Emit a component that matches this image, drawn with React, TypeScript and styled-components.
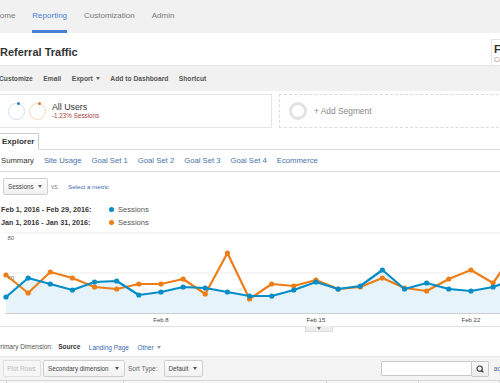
import React from "react";
import styled, { createGlobalStyle } from "styled-components";
import { Search } from "lucide-react";

const Global = createGlobalStyle`
  html, body { margin: 0; padding: 0; background: #fff; }
  body { width: 500px; height: 383px; overflow: hidden; font-family: "Liberation Sans", Arial, sans-serif; }
  * { box-sizing: border-box; }
`;

const Page = styled.div`
  width: 500px;
  height: 383px;
  overflow: hidden;
  background: #fff;
  color: #333;
`;

/* ---------- top nav ---------- */
const Nav = styled.nav`
  height: 33px;
  background: #f1f1f1;
  display: flex;
  align-items: stretch;
  gap: 17px;
`;
const NavItem = styled.div<{ $active?: boolean; $shift?: number }>`
  display: flex;
  align-items: center;
  margin-left: ${(p) => p.$shift ?? 0}px;
  font-size: 8px;
  color: ${(p) => (p.$active ? "#4a7fd6" : "#7a7a7a")};
  border-bottom: 3px solid ${(p) => (p.$active ? "#4a7fd6" : "transparent")};
  white-space: nowrap;
`;

/* ---------- header ---------- */
const Header = styled.header`
  height: 33px;
  background: #fff;
  border-bottom: 1px solid #e6e6e6;
  display: flex;
  justify-content: space-between;
  align-items: flex-start;
`;
const Title = styled.h1`
  margin: 12px 0 0 0;
  font-size: 11px;
  line-height: 14px;
  font-weight: bold;
  color: #333;
  white-space: nowrap;
`;
const DateBox = styled.div`
  flex-shrink: 0;
  width: 150px;
  margin-right: -141px;
  margin-top: 6px;
  height: 26px;
  border: 1px solid #e3e3e3;
  border-bottom: none;
  padding: 3px 0 0 2px;
  white-space: nowrap;
  overflow: hidden;
`;
const DateMain = styled.div`
  font-size: 11px;
  line-height: 12px;
  font-weight: bold;
  color: #333;
`;
const DateSub = styled.div`
  font-size: 7px;
  line-height: 9px;
  color: #999;
`;

/* ---------- toolbar ---------- */
const Toolbar = styled.div`
  height: 25px;
  background: #f1f1f1;
  display: flex;
  align-items: center;
  gap: 10.5px;
  margin-left: -1px;
`;
const ToolItem = styled.span`
  font-size: 6.7px;
  font-weight: bold;
  color: #555;
  white-space: nowrap;
  display: inline-flex;
  align-items: center;
  gap: 3px;
`;
const Caret = styled.span<{ $color?: string }>`
  display: inline-block;
  width: 0;
  height: 0;
  border-left: 2.5px solid transparent;
  border-right: 2.5px solid transparent;
  border-top: 3px solid ${(p) => p.$color ?? "#666"};
`;

/* ---------- segments ---------- */
const SegmentRow = styled.div`
  display: flex;
  margin-top: 3px;
  height: 34px;
  gap: 7px;
`;
const SegmentBox = styled.div<{ $dashed?: boolean }>`
  flex-shrink: 0;
  width: ${(p) => (p.$dashed ? 240 : 280)}px;
  margin-left: ${(p) => (p.$dashed ? 0 : -8)}px;
  height: 34px;
  border: 1px ${(p) => (p.$dashed ? "dashed #dcdcdc" : "solid #e5e5e5")};
  display: flex;
  align-items: center;
  padding-left: ${(p) => (p.$dashed ? 9 : 15)}px;
`;
const Ring = styled.div<{ $color: string; $dot?: string; $width?: number; $size?: number }>`
  position: relative;
  width: ${(p) => p.$size ?? 17}px;
  height: ${(p) => p.$size ?? 17}px;
  border-radius: 50%;
  border: ${(p) => p.$width ?? 1.5}px solid ${(p) => p.$color};
  margin-right: 4px;
  &::after {
    content: "";
    display: ${(p) => (p.$dot ? "block" : "none")};
    position: absolute;
    top: -1.5px;
    left: 8px;
    width: 3px;
    height: 3px;
    border-radius: 50%;
    background: ${(p) => p.$dot};
  }
`;
const SegText = styled.div`
  margin-left: 2px;
  display: flex;
  flex-direction: column;
`;
const SegName = styled.div`
  font-size: 8.8px;
  line-height: 10px;
  color: #333;
`;
const SegDelta = styled.div`
  font-size: 6.3px;
  line-height: 8px;
  color: #a94442;
`;
const AddSeg = styled.span`
  margin-left: 3px;
  font-size: 8.4px;
  color: #888;
  white-space: nowrap;
`;

/* ---------- tabs ---------- */
const TabBar = styled.div`
  margin-top: 5px;
  height: 17px;
  border-bottom: 1px solid #d9d9d9;
  display: flex;
  align-items: stretch;
`;
const Tab = styled.div`
  margin-left: -1px;
  margin-bottom: -1px;
  padding: 0 4px 0 2px;
  background: #fff;
  border: 1px solid #ccc;
  border-bottom: 1px solid #fff;
  font-size: 8px;
  font-weight: bold;
  color: #333;
  display: flex;
  align-items: center;
`;
const SubTabs = styled.div`
  height: 22px;
  border-bottom: 1px solid #dedede;
  display: flex;
  align-items: center;
  gap: 10px;
  padding-left: 1px;
`;
const SubTab = styled.span<{ $active?: boolean }>`
  font-size: 7.7px;
  color: ${(p) => (p.$active ? "#333" : "#4872a8")};
  white-space: nowrap;
`;

/* ---------- metric selector ---------- */
const MetricRow = styled.div`
  margin-top: 5px;
  height: 18px;
  display: flex;
  align-items: center;
  padding-left: 3px;
`;
const Select = styled.div<{ $w: number; $disabled?: boolean }>`
  width: ${(p) => p.$w}px;
  height: 17px;
  border: 1px solid ${(p) => (p.$disabled ? "#e0e0e0" : "#cfcfcf")};
  border-radius: 2px;
  background: ${(p) => (p.$disabled ? "#f6f6f6" : "linear-gradient(#fdfdfd, #f1f1f1)")};
  display: flex;
  align-items: center;
  justify-content: ${(p) => (p.$disabled ? "center" : "space-between")};
  padding: 0 5px 0 4px;
  font-size: 6.3px;
  color: ${(p) => (p.$disabled ? "#bbb" : "#444")};
  white-space: nowrap;
  flex-shrink: 0;
`;
const Vs = styled.span`
  margin-left: 3px;
  margin-right: 9px;
  font-size: 6.3px;
  color: #888;
`;
const LinkText = styled.span<{ $size?: number }>`
  font-size: ${(p) => p.$size ?? 6.2}px;
  color: #3a6bb0;
  white-space: nowrap;
  display: inline-flex;
  align-items: center;
  gap: 3px;
`;

/* ---------- legend ---------- */
const Legend = styled.div`
  margin-top: 8px;
  display: grid;
  grid-template-columns: 108px auto;
  grid-auto-rows: 13px;
  align-items: center;
  padding-left: 1px;
`;
const LegendRange = styled.span`
  font-size: 7.2px;
  font-weight: bold;
  color: #333;
  white-space: nowrap;
`;
const LegendSeries = styled.span<{ $color: string }>`
  display: flex;
  align-items: center;
  gap: 4px;
  font-size: 7.6px;
  color: #555;
  &::before {
    content: "";
    width: 5px;
    height: 5px;
    border-radius: 50%;
    background: ${(p) => p.$color};
  }
`;

/* ---------- chart ---------- */
const ChartWrap = styled.div`
  position: relative;
  height: 98px;
  border-bottom: 1px solid #e0e0e0;
`;
const Handle = styled.div`
  position: absolute;
  left: 305px;
  top: 97px;
  width: 28px;
  height: 6px;
  background: #eee;
  border: 1px solid #ddd;
  border-top: none;
  display: flex;
  justify-content: center;
  align-items: center;
`;

/* ---------- dimension row ---------- */
const DimRow = styled.div`
  height: 30px;
  display: flex;
  align-items: flex-end;
  padding-bottom: 5px;
  margin-left: -4px;
  gap: 8.5px;
  border-bottom: 1px solid #e5e5e5;
`;
const DimLabel = styled.span<{ $bold?: boolean }>`
  font-size: 6.5px;
  line-height: 8px;
  color: ${(p) => (p.$bold ? "#333" : "#555")};
  font-weight: ${(p) => (p.$bold ? "bold" : "normal")};
  white-space: nowrap;
  margin-right: ${(p) => (p.$bold ? 0 : -3)}px;
`;

const Controls = styled.div`
  height: 23px;
  background: #f4f4f4;
  display: flex;
  align-items: center;
  padding-left: 3px;
  gap: 2px;
`;
const SortLabel = styled.span`
  margin: 0 4px 0 1px;
  font-size: 6.5px;
  color: #666;
  white-space: nowrap;
`;
const SearchGroup = styled.div`
  margin-left: auto;
  display: flex;
  align-items: center;
  margin-right: -22px;
`;
const SearchInput = styled.div`
  width: 91px;
  height: 15px;
  background: #fff;
  border: 1px solid #c8c8c8;
  border-radius: 2px 0 0 2px;
`;
const SearchButton = styled.div`
  width: 17px;
  height: 16px;
  border: 1px solid #c8c8c8;
  border-left: none;
  border-radius: 0 2px 2px 0;
  background: linear-gradient(#fbfbfb, #ececec);
  display: flex;
  align-items: center;
  justify-content: center;
`;
const Advanced = styled.span`
  margin-left: 5px;
  font-size: 6.5px;
  color: #3a6bb0;
  white-space: nowrap;
`;

const TableHead = styled.div`
  height: 20px;
  display: grid;
  grid-template-columns: 7px 117px 203px 92px 1fr;
  border-top: 1px solid #d5d5d5;
  background: #f7f7f7;
`;
const HeadCell = styled.div`
  border-right: 1px solid #d8d8d8;
`;

/* ---------- data ---------- */
const blue = [16, 35, 29, 23, 31, 32, 18, 21, 26, 25, 21, 17, 17, 23, 31, 24, 27, 43, 24, 30, 24, 22, 26, 34];
const orange = [38, 20, 41, 35, 26, 24, 29, 29, 34, 19, 60, 14, 29, 27, 33, 24, 26, 35, 25, 22, 34, 43, 30, 62];

const X0 = 6;
const STEP = 22.14;
const BASE = 84; // svg y of value 0
const px = (i: number) => X0 + i * STEP;
const py = (v: number) => BASE - v;

function pts(data: number[]) {
  return data.map((v, i) => `${px(i).toFixed(1)},${py(v).toFixed(1)}`).join(" ");
}

const Chart: React.FC = () => {
  const area =
    `M${px(0)},${BASE} ` +
    blue.map((v, i) => `L${px(i).toFixed(1)},${py(v).toFixed(1)}`).join(" ") +
    ` L${px(blue.length - 1)},${BASE} Z`;
  return (
    <svg width="500" height="98" viewBox="0 0 500 98" style={{ display: "block" }}>
      <line x1="5" y1="4" x2="500" y2="4" stroke="#ececec" strokeWidth="1" />
      <line x1="5" y1="44" x2="500" y2="44" stroke="#ececec" strokeWidth="1" />
      <path d={area} fill="#e6f3fa" />
      <line x1="5" y1={BASE + 0.5} x2="500" y2={BASE + 0.5} stroke="#cfcfcf" strokeWidth="1" />
      <text x="7.5" y="11.3" fontSize="6" fill="#666" fontFamily="Liberation Sans, Arial, sans-serif">80</text>
      <text x="7.5" y="51" fontSize="6" fill="#666" fontFamily="Liberation Sans, Arial, sans-serif">40</text>
      <polyline points={pts(orange)} fill="none" stroke="#ed7e17" strokeWidth="2.2" strokeLinejoin="round" />
      {orange.map((v, i) => (
        <circle key={"o" + i} cx={px(i)} cy={py(v)} r="2.6" fill="#ed7e17" />
      ))}
      <polyline points={pts(blue)} fill="none" stroke="#058dc7" strokeWidth="2.2" strokeLinejoin="round" />
      {blue.map((v, i) => (
        <circle key={"b" + i} cx={px(i)} cy={py(v)} r="2.6" fill="#058dc7" />
      ))}
      {[
        { i: 7, t: "Feb 8" },
        { i: 14, t: "Feb 15" },
        { i: 21, t: "Feb 22" },
      ].map((l) => (
        <text
          key={l.t}
          x={px(l.i)}
          y="93"
          fontSize="6"
          fill="#444"
          textAnchor="middle"
          fontFamily="Liberation Sans, Arial, sans-serif"
        >
          {l.t}
        </text>
      ))}
    </svg>
  );
};

export default function App() {
  return (
    <Page>
      <Global />
      <Nav>
        <NavItem $shift={-6}>Home</NavItem>
        <NavItem $active>Reporting</NavItem>
        <NavItem>Customization</NavItem>
        <NavItem>Admin</NavItem>
      </Nav>

      <Header>
        <Title>Referral Traffic</Title>
        <DateBox>
          <DateMain>Feb 1, 2016 - Feb 29, 2016</DateMain>
          <DateSub>Compare to: Jan 1, 2016 - Jan 31, 2016</DateSub>
        </DateBox>
      </Header>

      <Toolbar>
        <ToolItem>Customize</ToolItem>
        <ToolItem>Email</ToolItem>
        <ToolItem>
          Export <Caret $color="#666" />
        </ToolItem>
        <ToolItem>Add to Dashboard</ToolItem>
        <ToolItem>Shortcut</ToolItem>
      </Toolbar>

      <SegmentRow>
        <SegmentBox>
          <Ring $color="#c9e1f2" $dot="#2a7fbf" />
          <Ring $color="#f5d7bb" $dot="#d9822b" />
          <SegText>
            <SegName>All Users</SegName>
            <SegDelta>-1.23% Sessions</SegDelta>
          </SegText>
        </SegmentBox>
        <SegmentBox $dashed>
          <Ring $color="#e2e2e2" $width={3} $size={18} />
          <AddSeg>+ Add Segment</AddSeg>
        </SegmentBox>
      </SegmentRow>

      <TabBar>
        <Tab>Explorer</Tab>
      </TabBar>
      <SubTabs>
        <SubTab $active>Summary</SubTab>
        <SubTab>Site Usage</SubTab>
        <SubTab>Goal Set 1</SubTab>
        <SubTab>Goal Set 2</SubTab>
        <SubTab>Goal Set 3</SubTab>
        <SubTab>Goal Set 4</SubTab>
        <SubTab>Ecommerce</SubTab>
      </SubTabs>

      <MetricRow>
        <Select $w={45}>
          Sessions <Caret $color="#666" />
        </Select>
        <Vs>vs.</Vs>
        <LinkText>Select a metric</LinkText>
      </MetricRow>

      <Legend>
        <LegendRange>Feb 1, 2016 - Feb 29, 2016:</LegendRange>
        <LegendSeries $color="#058dc7">Sessions</LegendSeries>
        <LegendRange>Jan 1, 2016 - Jan 31, 2016:</LegendRange>
        <LegendSeries $color="#ed7e17">Sessions</LegendSeries>
      </Legend>

      <ChartWrap>
        <Chart />
        <Handle>
          <Caret $color="#777" />
        </Handle>
      </ChartWrap>

      <DimRow>
        <DimLabel>Primary Dimension:</DimLabel>
        <DimLabel $bold>Source</DimLabel>
        <LinkText $size={6.5}>Landing Page</LinkText>
        <LinkText $size={6.5}>
          Other <Caret $color="#999" />
        </LinkText>
      </DimRow>

      <Controls>
        <Select $w={38} $disabled>
          Plot Rows
        </Select>
        <Select $w={82}>
          Secondary dimension <Caret $color="#555" />
        </Select>
        <SortLabel>Sort Type:</SortLabel>
        <Select $w={39}>
          Default <Caret $color="#555" />
        </Select>
        <SearchGroup>
          <SearchInput />
          <SearchButton>
            <Search size={8} strokeWidth={3.2} color="#333" />
          </SearchButton>
          <Advanced>advanced</Advanced>
        </SearchGroup>
      </Controls>

      <TableHead>
        <HeadCell />
        <HeadCell />
        <HeadCell />
        <HeadCell />
        <HeadCell />
      </TableHead>
    </Page>
  );
}
